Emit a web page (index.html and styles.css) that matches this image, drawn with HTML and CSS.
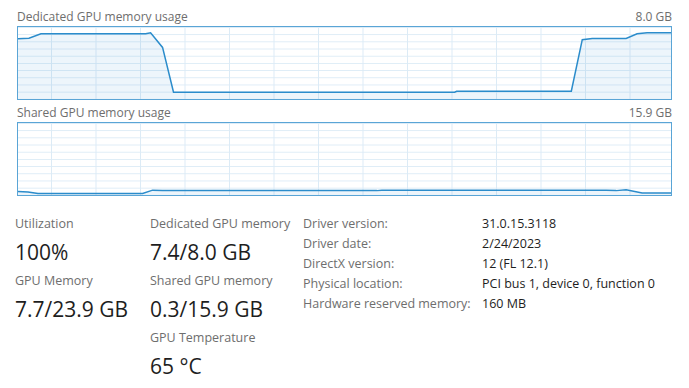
FILE: index.html
```html
<!DOCTYPE html>
<html lang="en">
<head>
  <meta charset="UTF-8">
  <title>GPU</title>
  <link rel="stylesheet" href="styles.css">
</head>
<body>
  <div class="graph-block">
    <div class="graph-head">
      <span>Dedicated GPU memory usage</span>
      <span>8.0 GB</span>
    </div>
    <div class="graph">
      <svg viewBox="0 0 655 74" preserveAspectRatio="none">
        <path class="area" d="M0,12 L11,11.5 L23,7 L128,7 L133,6 L145,21 L156,67 L438,67 L440,66 L555,66 L566,13 L576,11.7 L610,11.7 L621,7 L631,6 L655,6 L655,74 L0,74 Z"/>
        <path class="line" d="M0,12 L11,11.5 L23,7 L128,7 L133,6 L145,21 L156,67 L438,67 L440,66 L555,66 L566,13 L576,11.7 L610,11.7 L621,7 L631,6 L655,6"/>
      </svg>
    </div>
  </div>

  <div class="graph-block">
    <div class="graph-head">
      <span>Shared GPU memory usage</span>
      <span>15.9 GB</span>
    </div>
    <div class="graph">
      <svg viewBox="0 0 655 74" preserveAspectRatio="none">
        <path class="area" d="M0,70.3 L10,71 L20,72.5 L125,72.5 L135,69 L145,69.5 L360,69.5 L365,69 L590,69 L600,69.5 L610,68.5 L626,72 L655,72 L655,74 L0,74 Z"/>
        <path class="line" d="M0,70.3 L10,71 L20,72.5 L125,72.5 L135,69 L145,69.5 L360,69.5 L365,69 L590,69 L600,69.5 L610,68.5 L626,72 L655,72"/>
      </svg>
    </div>
  </div>

  <div class="stats">
    <div class="stat-col">
      <div class="stat-label">Utilization</div>
      <div class="stat-value">100%</div>
      <div class="stat-label">GPU Memory</div>
      <div class="stat-value">7.7/23.9 GB</div>
    </div>
    <div class="stat-col">
      <div class="stat-label">Dedicated GPU memory</div>
      <div class="stat-value">7.4/8.0 GB</div>
      <div class="stat-label">Shared GPU memory</div>
      <div class="stat-value">0.3/15.9 GB</div>
      <div class="stat-label">GPU Temperature</div>
      <div class="stat-value">65 °C</div>
    </div>
    <div class="info">
      <span class="info-key">Driver version:</span><span>31.0.15.3118</span>
      <span class="info-key">Driver date:</span><span>2/24/2023</span>
      <span class="info-key">DirectX version:</span><span>12 (FL 12.1)</span>
      <span class="info-key">Physical location:</span><span>PCI bus 1, device 0, function 0</span>
      <span class="info-key">Hardware reserved memory:</span><span>160 MB</span>
    </div>
  </div>
</body>
</html>
```

FILE: styles.css
```css
body {
  font-family: "Open Sans", "Noto Sans", sans-serif;
  margin: 0;
  padding: 9px 17px 0 17px;
  background: white;
  color: #1e1e1e;
}

.graph-block {
  margin-bottom: 5px;
}

.graph-head {
  display: flex;
  justify-content: space-between;
  font-size: 12px;
  line-height: 16px;
  color: #6e6e6e;
  margin-bottom: 1px;
}

.graph {
  height: 74px;
  box-sizing: border-box;
  border: 1px solid #5aa5d6;
  background-color: white;
  background-image:
    linear-gradient(to bottom, #dcebf6 1px, transparent 1px),
    linear-gradient(to right, #dcebf6 1px, transparent 1px);
  background-size: 100% 7.2px, 44.5px 100%;
  background-position: 0 7.2px, 33px 0;
}

.graph svg {
  display: block;
  width: 100%;
  height: 100%;
}

.graph .area {
  fill: rgba(30, 130, 200, 0.08);
}

.graph .line {
  fill: none;
  stroke: #2b8ccb;
  stroke-width: 1.5;
  vector-effect: non-scaling-stroke;
}

.stats {
  display: grid;
  grid-template-columns: 135px 153px 1fr;
  margin-top: 18px;
  margin-left: -2px;
}

.stat-label {
  font-size: 12.5px;
  line-height: 20px;
  color: #6e6e6e;
}

.stat-value {
  font-size: 21px;
  line-height: 37px;
  color: #1e1e1e;
}

.info {
  display: grid;
  grid-template-columns: 179px auto;
  grid-auto-rows: 20px;
  align-content: start;
  font-size: 12.5px;
  line-height: 20px;
  color: #1e1e1e;
}

.info-key {
  color: #6e6e6e;
}
```
